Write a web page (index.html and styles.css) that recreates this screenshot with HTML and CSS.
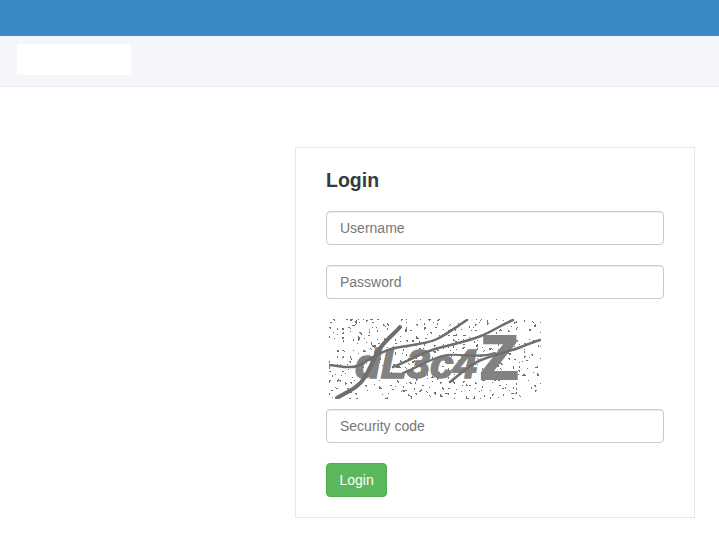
FILE: index.html
```html
<!DOCTYPE html>
<html>
  <head>
    <title>Login</title>
    <link rel="stylesheet" href="styles.css">
  </head>
  <body>
    <div class="top-bar"></div>
    <div class="nav-bar">
      <div class="logo"></div>
    </div>
    <div class="container">
      <div class="login-box">
        <h2 class="title">Login</h2>
        <input class="form-input" type="text" placeholder="Username" />
        <input class="form-input" type="password" placeholder="Password" />
        <svg class="captcha" width="212" height="80" viewBox="0 0 212 80">
          <defs>
            <filter id="speckle" x="0" y="0" width="100%" height="100%" color-interpolation-filters="sRGB">
              <feTurbulence type="fractalNoise" baseFrequency="0.38" numOctaves="1" seed="7" />
              <feColorMatrix type="matrix" values="0 0 0 0 0.45  0 0 0 0 0.45  0 0 0 0 0.45  4 4 0 0 -4.4" />
              <feComponentTransfer>
                <feFuncA type="discrete" tableValues="0 1" />
              </feComponentTransfer>
            </filter>
          </defs>
          <rect width="212" height="80" fill="#fff" />
          <rect width="212" height="80" filter="url(#speckle)" />
          <text class="captcha-text captcha-slant" x="26" y="59" font-size="40" textLength="122" lengthAdjust="spacingAndGlyphs">dL3c4</text>
          <text class="captcha-text captcha-big" x="151" y="60" font-size="63">Z</text>
          <g class="captcha-lines">
            <path stroke-width="4" d="M8 79C20 72 30 68 36 58S46 36 52 28 66 14 71 8" />
            <path stroke-width="2.5" d="M1 46C12 47 20 50 28 47S48 34 62 30 96 26 108 20 130 6 138 1" />
            <path stroke-width="2.5" d="M64 48C80 42 92 34 106 30S140 22 152 17 172 6 184 1" />
            <path stroke-width="2.5" d="M121 63C130 56 140 46 152 41S182 32 192 28 204 23 211 21" />
            <path stroke-width="2" d="M74 54C90 48 104 38 118 36S150 40 166 34" />
          </g>
        </svg>
        <input class="form-input" type="text" placeholder="Security code" />
        <button class="login-btn">Login</button>
      </div>
    </div>
  </body>
</html>
```

FILE: styles.css
```css
body {
  margin: 0;
  background: #fff;
  font-family: "Liberation Sans", Arial, sans-serif;
  font-size: 14px;
  color: #333;
}
.top-bar {
  height: 36px;
  background: #3989c4;
}
.nav-bar {
  height: 42px;
  padding: 8px 0 0 17px;
  background: #f5f6fa;
  border-bottom: 1px solid #e7e7ee;
}
.logo {
  width: 114px;
  height: 31px;
  background: #fff;
}
.container {
  display: flex;
  justify-content: flex-end;
  padding: 60px 24px 20px 0;
}
.login-box {
  display: flex;
  flex-direction: column;
  align-items: flex-start;
  width: 338px;
  padding: 20px 30px 20px;
  border: 1px solid #e7e7e7;
}
.title {
  margin: 0 0 19px;
  font-size: 19.5px;
  line-height: 24px;
  font-weight: bold;
  color: #373a3f;
}
.form-input {
  width: 100%;
  height: 34px;
  box-sizing: border-box;
  margin-bottom: 20px;
  padding: 6px 13px;
  border: 1px solid #ccc;
  border-radius: 4px;
  font-family: inherit;
  font-size: 14px;
  color: #555;
  box-shadow: inset 0 1px 1px rgba(0, 0, 0, 0.075);
}
.form-input::placeholder {
  color: #777;
  opacity: 1;
}
.captcha {
  display: block;
  margin: 0 0 10px 3px;
}
.captcha-text {
  font-family: "Liberation Sans", Arial, sans-serif;
  font-weight: bold;
  fill: #828282;
  stroke: #828282;
  stroke-width: 1.5;
}
.captcha-slant {
  font-style: italic;
}
.captcha-big {
  stroke-width: 2;
}
.captcha-lines path {
  fill: none;
  stroke: #6e6e6e;
  stroke-linecap: round;
}
.login-btn {
  height: 34px;
  padding: 6px 12.5px;
  background: #5cb85c;
  border: 1px solid #4cae4c;
  border-radius: 4px;
  font-family: inherit;
  font-size: 14px;
  color: #fff;
}
```
